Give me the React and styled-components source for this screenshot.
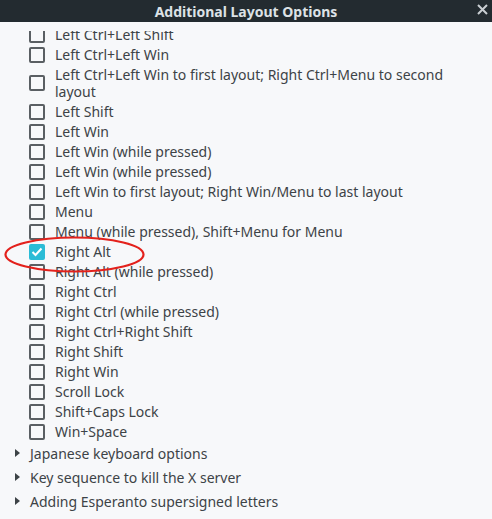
import React from 'react';
import styled, { createGlobalStyle } from 'styled-components';

const GlobalStyle = createGlobalStyle`
    html, body {
        margin: 0;
        padding: 0;
        background: #f7f8fa;
    }
    * {
        box-sizing: border-box;
    }
`;

const Window = styled.div`
    position: relative;
    width: 492px;
    height: 519px;
    overflow: hidden;
    background: #f7f8fa;
    font-family: 'Noto Sans', 'Open Sans', sans-serif;
    font-size: 14px;
    color: #3d4347;
    display: flex;
    flex-direction: column;
`;

const TitleBar = styled.div`
    height: 22px;
    flex: none;
    background: #232b30;
    color: #dde2e6;
    font-weight: bold;
    font-size: 14px;
    display: flex;
    align-items: center;
    justify-content: center;
    position: relative;
`;

const CloseButton = styled.div`
    position: absolute;
    right: 4px;
    top: 4px;
    width: 11px;
    height: 11px;
    display: flex;
`;

const Body = styled.div`
    flex: 1;
    padding-top: 9px;
    display: flex;
    flex-direction: column;
    min-height: 0;
`;

const Viewport = styled.div`
    flex: 1;
    overflow: hidden;
`;

const List = styled.div`
    margin-top: -7px;
    display: flex;
    flex-direction: column;
`;

const OptionRow = styled.div`
    display: flex;
    align-items: center;
    padding: 2px 0 1px 29px;
    line-height: 17px;
    gap: 10px;
`;

const Box = styled.div`
    width: 16px;
    height: 16px;
    flex: none;
    border-radius: 2px;
    border: ${(p) => (p.$checked ? 'none' : '2px solid #5a5f63')};
    background: ${(p) => (p.$checked ? '#2bbcd6' : 'transparent')};
    display: flex;
    align-items: center;
    justify-content: center;
`;

const Label = styled.span`
    max-width: 400px;
`;

const Expander = styled.div`
    display: flex;
    align-items: center;
    height: 24px;
    padding-left: 15px;
    gap: 10px;
`;

const Arrow = styled.span`
    width: 0;
    height: 0;
    border-top: 4px solid transparent;
    border-bottom: 4px solid transparent;
    border-left: 5px solid #3d4347;
`;

const Highlight = styled.svg`
    position: absolute;
    left: 0;
    top: 230px;
    pointer-events: none;
`;

const options = [
    'Left Ctrl+Left Shift',
    'Left Ctrl+Left Win',
    'Left Ctrl+Left Win to first layout; Right Ctrl+Menu to second layout',
    'Left Shift',
    'Left Win',
    'Left Win (while pressed)',
    'Left Win (while pressed)',
    'Left Win to first layout; Right Win/Menu to last layout',
    'Menu',
    'Menu (while pressed), Shift+Menu for Menu',
    'Right Alt',
    'Right Alt (while pressed)',
    'Right Ctrl',
    'Right Ctrl (while pressed)',
    'Right Ctrl+Right Shift',
    'Right Shift',
    'Right Win',
    'Scroll Lock',
    'Shift+Caps Lock',
    'Win+Space',
];

const groups = [
    'Japanese keyboard options',
    'Key sequence to kill the X server',
    'Adding Esperanto supersigned letters',
];

function Checkbox({ checked }) {
    return (
        <Box $checked={checked}>
            {checked && (
                <svg width="12" height="10" viewBox="0 0 12 10">
                    <path d="M1.5 5 L4.5 8 L10.5 1.5" fill="none" stroke="#fff" strokeWidth="2" />
                </svg>
            )}
        </Box>
    );
}

function App() {
    return (
        <Window>
            <GlobalStyle />
            <TitleBar>
                Additional Layout Options
                <CloseButton>
                    <svg width="11" height="11" viewBox="0 0 11 11">
                        <path d="M1 1 L10 10 M10 1 L1 10" stroke="#c9ced2" strokeWidth="2" />
                    </svg>
                </CloseButton>
            </TitleBar>
            <Body>
                <Viewport>
                    <List>
                        {options.map((o, i) => (
                            <OptionRow key={i}>
                                <Checkbox checked={o === 'Right Alt'} />
                                <Label>{o}</Label>
                            </OptionRow>
                        ))}
                        {groups.map((g) => (
                            <Expander key={g}>
                                <Arrow />
                                <span>{g}</span>
                            </Expander>
                        ))}
                    </List>
                </Viewport>
            </Body>
            <Highlight width="160" height="50" viewBox="0 0 160 50">
                <ellipse cx="74.5" cy="24.5" rx="69" ry="17" fill="none" stroke="#e3211c" strokeWidth="2.2" />
            </Highlight>
        </Window>
    );
}

export default App;
